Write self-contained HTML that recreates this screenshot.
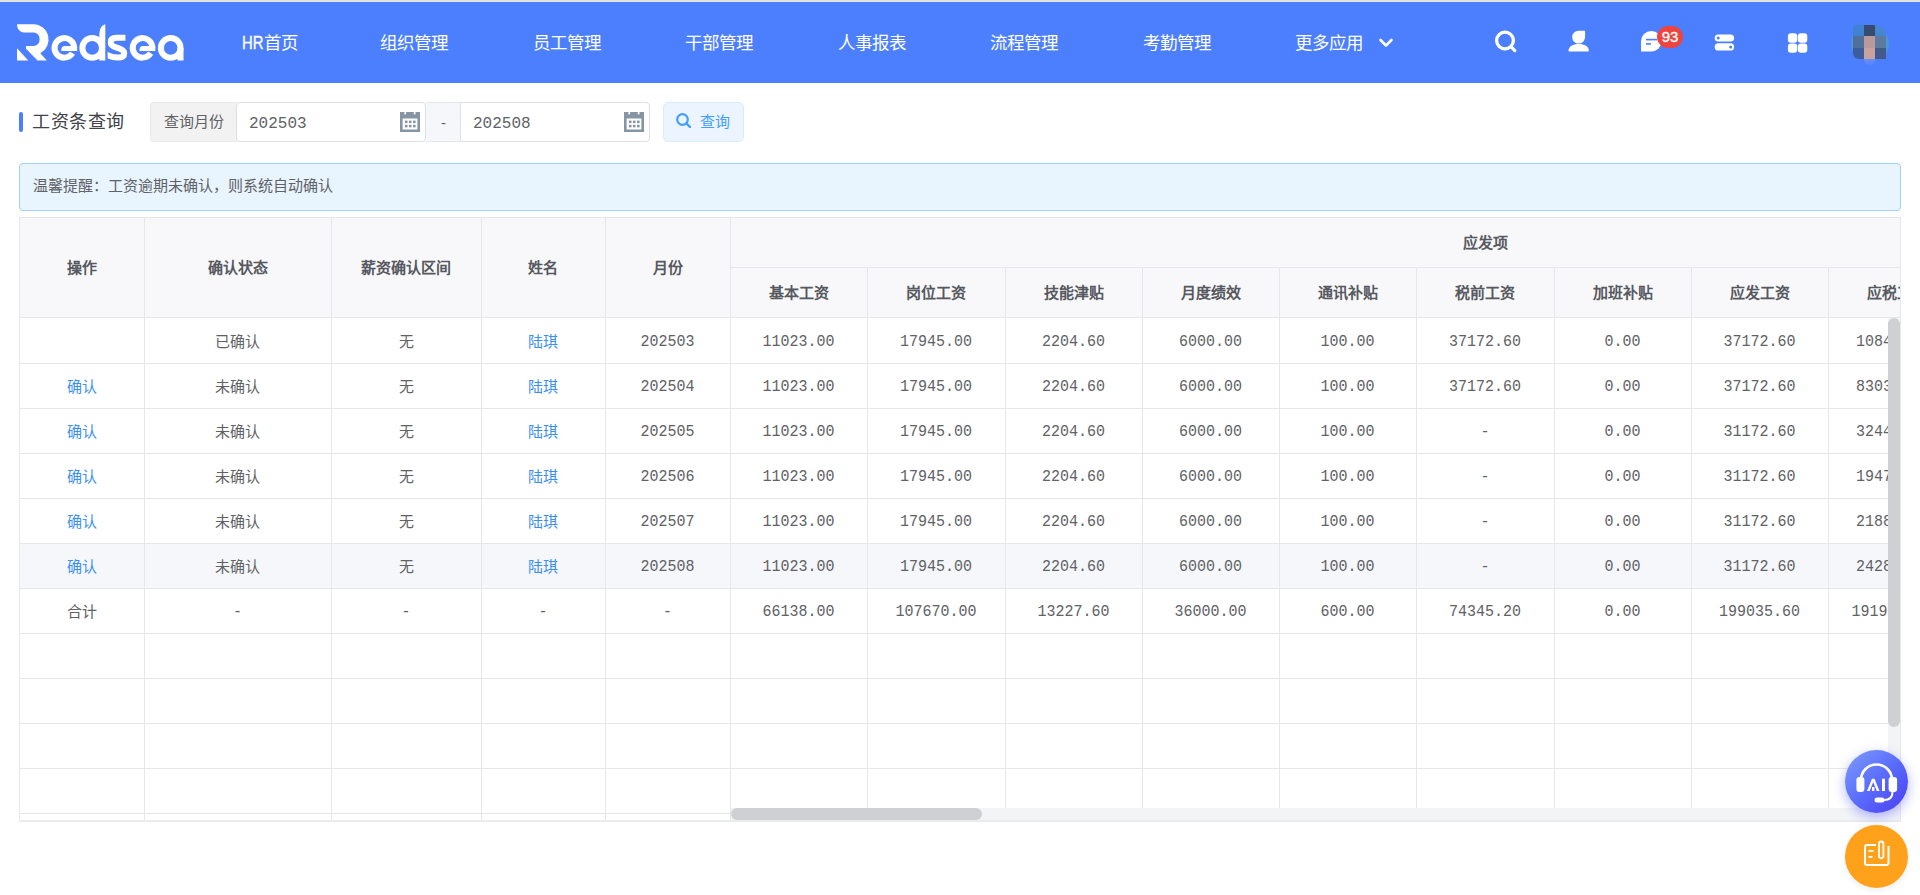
<!DOCTYPE html>
<html lang="zh-CN"><head><meta charset="utf-8"><style>
*{margin:0;padding:0;box-sizing:border-box}
html,body{width:1920px;height:895px;overflow:hidden;background:#fff;font-family:"Liberation Sans",sans-serif;position:relative}
.abs{position:absolute}
.nav{position:absolute;top:29px;height:28px;line-height:28px;font-size:17.5px;font-weight:500;color:#fff;white-space:nowrap}
.hl{position:absolute;height:1px;background:#e6e7ea}
.vl{position:absolute;width:1px;background:#e6e7ea}
.c{position:absolute;text-align:center;white-space:nowrap;font-size:15px;line-height:26px;color:#606266}
.th{font-weight:bold;color:#56595f}
.num{font-family:"Liberation Mono",monospace}
.c.num{transform:scaleY(1.07);transform-origin:50% 11.5px}
.lk{color:#3b8ff7}
</style></head><body>

<div class="abs" style="left:0;top:0;width:1920px;height:2px;background:#e4e4e4"></div>
<div class="abs" style="left:0;top:2px;width:1920px;height:81px;background:#4c7ffe"></div>
<svg class="abs" style="left:0;top:0" width="200" height="83" viewBox="0 0 200 83">
<g fill="#fff">
<path d="M17,24.3 L33.4,24.3 A15.3,15.3 0 0 1 40.3,53.2 L46.9,60.5 L37.6,60.5 L26,48.8 L26,45.9 L34,45.9 A6.8,6.8 0 0 0 34,32.5 L24,32.5 C20,32.5 17,29 17,24.3 Z"/>
<path d="M17,48.2 L17,60.5 L28.3,60.5 Z"/>
<path d="M99.3,60.5 L99.3,36 C99.3,29 101.5,25 105.3,24.3 L105.3,60.5 Z"/>
<rect x="177.5" y="47.9" width="6" height="12.6"/>
<path d="M61.3,50.9 L61.3,49.5 C61.3,47 63,45.9 65,45.9 L77.1,45.9 L77.1,50.9 Z"/>
<path d="M139.5,50.9 L139.5,49.5 C139.5,47 141.2,45.9 143.2,45.9 L155.3,45.9 L155.3,50.9 Z"/>
</g>
<g fill="none" stroke="#fff" stroke-width="6">
<path d="M74.1,47.9 A9.8,9.8 0 1 0 72.5,53.2"/>
<circle cx="92.2" cy="47.9" r="9.8"/>
<path d="M152.3,47.9 A9.8,9.8 0 1 0 150.7,53.2"/>
<circle cx="170.7" cy="47.9" r="9.8"/>
<clipPath id="sc"><path d="M107.6,30 L125.4,30 L125.4,44 L131,44 L131,65 L107.6,65 Z"/></clipPath><path clip-path="url(#sc)" d="M128,37.8 L116.5,37.8 Q110.6,37.8 110.6,42.5 Q110.6,45.6 116,47.4 L119,48.4 Q124.2,50.1 124.2,53.4 Q124.2,57.5 117.5,57.5 Q111,57.5 104,53.5"/>
</g>
</svg>
<div class="nav" style="left:242px"><span style="display:inline-block;transform:scaleX(0.85);transform-origin:0 0;margin-right:-3.5px;-webkit-text-stroke:0.35px #fff">HR</span>首页</div>
<div class="nav" style="left:380px">组织管理</div>
<div class="nav" style="left:533px">员工管理</div>
<div class="nav" style="left:685px">干部管理</div>
<div class="nav" style="left:838px">人事报表</div>
<div class="nav" style="left:990px">流程管理</div>
<div class="nav" style="left:1143px">考勤管理</div>
<div class="nav" style="left:1295px">更多应用</div>
<svg class="abs" style="left:1360px;top:0" width="560" height="83" viewBox="1360 0 560 83">
<polyline points="1380.5,40 1386,45.5 1391.5,40" fill="none" stroke="#fff" stroke-width="2.6" stroke-linecap="round" stroke-linejoin="round"/>
<circle cx="1505" cy="40.5" r="8.4" fill="none" stroke="#fff" stroke-width="3.3"/>
<line x1="1511.5" y1="47.2" x2="1514.8" y2="50.6" stroke="#fff" stroke-width="3.2" stroke-linecap="round"/>
<path fill="#fff" d="M1578.6,30.7 L1585.1,30.7 L1585.1,37.1 A6.45,6.45 0 1 1 1578.6,30.7 Z"/>
<path fill="#fff" d="M1569.5,51.6 Q1568.5,51.6 1568.5,50.6 C1568.5,46.5 1573,43.9 1578.7,43.9 C1584.4,43.9 1588.9,46.5 1588.9,50.6 Q1588.9,51.6 1587.9,51.6 Z"/>
<path fill="#fff" d="M1641,51.6 L1641,41.3 A10.3,10.3 0 1 1 1651.3,51.6 Z"/>
<rect x="1646" y="38.8" width="11" height="1.6" fill="#4c7ffe"/>
<rect x="1646" y="43.1" width="5" height="1.6" fill="#4c7ffe"/>
<rect x="1714.7" y="34.4" width="19.4" height="7.2" rx="3.6" fill="#fff"/>
<rect x="1714.7" y="43.3" width="19.4" height="7.2" rx="3.6" fill="#fff"/>
<circle cx="1718.2" cy="38" r="1.5" fill="#4c7ffe"/>
<circle cx="1730.6" cy="46.9" r="1.5" fill="#4c7ffe"/>
<rect x="1787.9" y="33.2" width="9.4" height="9.6" rx="3" fill="#fff"/>
<rect x="1797.9" y="33.2" width="9.4" height="9.6" rx="3" fill="#fff"/>
<rect x="1787.9" y="43.4" width="9.4" height="9.4" rx="3" fill="#fff"/>
<rect x="1797.9" y="43.4" width="9.4" height="9.4" rx="3" fill="#fff"/>
</svg>
<div class="abs" style="left:1657px;top:26px;width:26px;height:22px;border-radius:11px;background:#ee4440;color:#fff;font-size:15px;line-height:22px;text-align:center;-webkit-text-stroke:0.3px #fff">93</div>
<div class="abs" style="left:1851px;top:25px;width:38px;height:38px;border-radius:50%;background:#4a97dc"></div>
<div class="abs" style="left:1853px;top:25px;width:33px;height:34px;border-radius:4px 12px 0 6px;overflow:hidden">
<div class="abs" style="left:0;top:0;width:11px;height:11px;background:#4181d2"></div>
<div class="abs" style="left:11px;top:0;width:11px;height:11px;background:#364b6e"></div>
<div class="abs" style="left:22px;top:0;width:11px;height:11px;background:#4785d0"></div>
<div class="abs" style="left:0;top:11px;width:11px;height:11.5px;background:#50709b"></div>
<div class="abs" style="left:11px;top:11px;width:11px;height:11.5px;background:#b89a9c"></div>
<div class="abs" style="left:22px;top:11px;width:11px;height:11.5px;background:#5d7a9f"></div>
<div class="abs" style="left:0;top:22.5px;width:11px;height:11.5px;background:#3b5d9b"></div>
<div class="abs" style="left:11px;top:22.5px;width:11px;height:11.5px;background:#c9a19f"></div>
<div class="abs" style="left:22px;top:22.5px;width:11px;height:11.5px;background:#435b8b"></div>
</div>
<div class="abs" style="left:1851px;top:59px;width:38px;height:4px;background:#4c7ffe"></div>
<div class="abs" style="left:1864px;top:59px;width:11px;height:6px;border-radius:0 0 5px 5px;background:linear-gradient(#6a8ef0,rgba(106,142,240,0.3))"></div>

<div class="abs" style="left:19px;top:112px;width:4px;height:20px;border-radius:2px;background:#4c7ffe"></div>
<div class="abs" style="left:32px;top:109px;font-size:18px;letter-spacing:0.5px;line-height:26px;color:#404348">工资条查询</div>
<div class="abs" style="left:150px;top:102px;width:87px;height:40px;background:#f2f2f2;border:1px solid #e8eaee;border-right:none;border-radius:4px 0 0 4px;font-size:15px;line-height:38px;text-align:center;color:#606266">查询月份</div>
<div class="abs" style="left:236px;top:102px;width:190px;height:40px;border:1px solid #dcdfe6;border-radius:4px;background:#fff"></div>
<div class="abs num" style="left:249px;top:104px;height:40px;line-height:40px;font-size:16px;color:#606266">202503</div>
<div class="abs" style="left:426px;top:102px;width:35px;height:40px;background:#f5f7fa;border-top:1px solid #e4e7ed;border-bottom:1px solid #e4e7ed;font-size:15px;line-height:40px;text-align:center;color:#606266">-</div>
<div class="abs" style="left:460px;top:102px;width:190px;height:40px;border:1px solid #dcdfe6;border-radius:0 4px 4px 0;background:#fff"></div>
<div class="abs num" style="left:473px;top:104px;height:40px;line-height:40px;font-size:16px;color:#606266">202508</div>
<svg class="abs" style="left:400px;top:112px" width="20" height="20" viewBox="0 0 20 20">
<rect x="0" y="0" width="20" height="20" fill="#8595a3"/>
<rect x="4.4" y="0" width="1.7" height="2.4" fill="#fff"/><rect x="13.8" y="0" width="1.7" height="2.4" fill="#fff"/>
<rect x="2.6" y="6.5" width="14.8" height="11" fill="#fff"/>
<rect x="4.9" y="8.6" width="2.6" height="2.5" fill="#8595a3"/><rect x="8.9" y="8.6" width="2.6" height="2.5" fill="#8595a3"/><rect x="13" y="8.6" width="2.6" height="2.5" fill="#8595a3"/>
<rect x="4.9" y="12.8" width="2.6" height="2.5" fill="#8595a3"/><rect x="8.9" y="12.8" width="2.6" height="2.5" fill="#8595a3"/><rect x="13" y="12.8" width="2.6" height="2.5" fill="#8595a3"/>
</svg>
<svg class="abs" style="left:624px;top:112px" width="20" height="20" viewBox="0 0 20 20">
<rect x="0" y="0" width="20" height="20" fill="#8595a3"/>
<rect x="4.4" y="0" width="1.7" height="2.4" fill="#fff"/><rect x="13.8" y="0" width="1.7" height="2.4" fill="#fff"/>
<rect x="2.6" y="6.5" width="14.8" height="11" fill="#fff"/>
<rect x="4.9" y="8.6" width="2.6" height="2.5" fill="#8595a3"/><rect x="8.9" y="8.6" width="2.6" height="2.5" fill="#8595a3"/><rect x="13" y="8.6" width="2.6" height="2.5" fill="#8595a3"/>
<rect x="4.9" y="12.8" width="2.6" height="2.5" fill="#8595a3"/><rect x="8.9" y="12.8" width="2.6" height="2.5" fill="#8595a3"/><rect x="13" y="12.8" width="2.6" height="2.5" fill="#8595a3"/>
</svg>
<div class="abs" style="left:663px;top:102px;width:81px;height:40px;border:1px solid #d9ecff;border-radius:5px;background:#ecf5ff"></div>
<svg class="abs" style="left:675px;top:112px" width="18" height="18" viewBox="0 0 18 18"><circle cx="7.5" cy="7.5" r="5.3" fill="none" stroke="#409eff" stroke-width="2.2"/><line x1="11.5" y1="11.5" x2="15" y2="15" stroke="#409eff" stroke-width="2.4" stroke-linecap="round"/></svg>
<div class="abs" style="left:700px;top:102px;line-height:40px;font-size:15px;color:#409eff">查询</div>
<div class="abs" style="left:19px;top:163px;width:1882px;height:48px;border:1px solid #a3d0fd;border-radius:4px;background:#e8f4fe"></div>
<div class="abs" style="left:33px;top:172px;line-height:28px;font-size:15px;color:#606266">温馨提醒：工资逾期未确认，则系统自动确认</div>
<div class="abs" style="left:19px;top:217px;width:1882px;height:100px;background:#f8f8fa"></div>
<div class="abs" style="left:20px;top:544px;width:1868px;height:44px;background:#f5f7fa"></div>
<div class="hl" style="left:19px;top:217px;width:1882px"></div>
<div class="hl" style="left:730px;top:267px;width:1171px"></div>
<div class="hl" style="left:19px;top:317px;width:1882px"></div>
<div class="hl" style="left:19px;top:363px;width:1882px"></div>
<div class="hl" style="left:19px;top:408px;width:1882px"></div>
<div class="hl" style="left:19px;top:453px;width:1882px"></div>
<div class="hl" style="left:19px;top:498px;width:1882px"></div>
<div class="hl" style="left:19px;top:543px;width:1882px"></div>
<div class="hl" style="left:19px;top:588px;width:1882px"></div>
<div class="hl" style="left:19px;top:633px;width:1882px"></div>
<div class="hl" style="left:19px;top:678px;width:1882px"></div>
<div class="hl" style="left:19px;top:723px;width:1882px"></div>
<div class="hl" style="left:19px;top:768px;width:1882px"></div>
<div class="hl" style="left:19px;top:813px;width:711px"></div>
<div class="vl" style="left:19px;top:217px;height:604px"></div>
<div class="vl" style="left:144px;top:217px;height:604px"></div>
<div class="vl" style="left:331px;top:217px;height:604px"></div>
<div class="vl" style="left:481px;top:217px;height:604px"></div>
<div class="vl" style="left:605px;top:217px;height:604px"></div>
<div class="vl" style="left:730px;top:217px;height:604px"></div>
<div class="vl" style="left:867px;top:267px;height:541px"></div>
<div class="vl" style="left:1005px;top:267px;height:541px"></div>
<div class="vl" style="left:1142px;top:267px;height:541px"></div>
<div class="vl" style="left:1279px;top:267px;height:541px"></div>
<div class="vl" style="left:1416px;top:267px;height:541px"></div>
<div class="vl" style="left:1554px;top:267px;height:541px"></div>
<div class="vl" style="left:1691px;top:267px;height:541px"></div>
<div class="vl" style="left:1828px;top:267px;height:541px"></div>
<div class="c th" style="left:19px;width:125px;top:255px">操作</div>
<div class="c th" style="left:144px;width:187px;top:255px">确认状态</div>
<div class="c th" style="left:331px;width:150px;top:255px">薪资确认区间</div>
<div class="c th" style="left:481px;width:124px;top:255px">姓名</div>
<div class="c th" style="left:605px;width:125px;top:255px">月份</div>
<div class="c th" style="left:730px;width:1510px;top:230px">应发项</div>
<div class="c th" style="left:730px;width:137px;top:280px">基本工资</div>
<div class="c th" style="left:867px;width:138px;top:280px">岗位工资</div>
<div class="c th" style="left:1005px;width:137px;top:280px">技能津贴</div>
<div class="c th" style="left:1142px;width:137px;top:280px">月度绩效</div>
<div class="c th" style="left:1279px;width:137px;top:280px">通讯补贴</div>
<div class="c th" style="left:1416px;width:138px;top:280px">税前工资</div>
<div class="c th" style="left:1554px;width:137px;top:280px">加班补贴</div>
<div class="c th" style="left:1691px;width:137px;top:280px">应发工资</div>
<div class="c th" style="left:1828px;width:137px;top:280px">应税工资</div>
<div class="c" style="left:19px;width:125px;top:329px"></div>
<div class="c" style="left:144px;width:187px;top:329px">已确认</div>
<div class="c" style="left:331px;width:150px;top:329px">无</div>
<div class="c lk" style="left:481px;width:124px;top:329px">陆琪</div>
<div class="c num" style="left:605px;width:125px;top:330px">202503</div>
<div class="c num" style="left:730px;width:137px;top:330px">11023.00</div>
<div class="c num" style="left:867px;width:138px;top:330px">17945.00</div>
<div class="c num" style="left:1005px;width:137px;top:330px">2204.60</div>
<div class="c num" style="left:1142px;width:137px;top:330px">6000.00</div>
<div class="c num" style="left:1279px;width:137px;top:330px">100.00</div>
<div class="c num" style="left:1416px;width:138px;top:330px">37172.60</div>
<div class="c num" style="left:1554px;width:137px;top:330px">0.00</div>
<div class="c num" style="left:1691px;width:137px;top:330px">37172.60</div>
<div class="c num" style="left:1828px;width:137px;top:330px">10843.600</div>
<div class="c lk" style="left:19px;width:125px;top:374px">确认</div>
<div class="c" style="left:144px;width:187px;top:374px">未确认</div>
<div class="c" style="left:331px;width:150px;top:374px">无</div>
<div class="c lk" style="left:481px;width:124px;top:374px">陆琪</div>
<div class="c num" style="left:605px;width:125px;top:375px">202504</div>
<div class="c num" style="left:730px;width:137px;top:375px">11023.00</div>
<div class="c num" style="left:867px;width:138px;top:375px">17945.00</div>
<div class="c num" style="left:1005px;width:137px;top:375px">2204.60</div>
<div class="c num" style="left:1142px;width:137px;top:375px">6000.00</div>
<div class="c num" style="left:1279px;width:137px;top:375px">100.00</div>
<div class="c num" style="left:1416px;width:138px;top:375px">37172.60</div>
<div class="c num" style="left:1554px;width:137px;top:375px">0.00</div>
<div class="c num" style="left:1691px;width:137px;top:375px">37172.60</div>
<div class="c num" style="left:1828px;width:137px;top:375px">83036.600</div>
<div class="c lk" style="left:19px;width:125px;top:419px">确认</div>
<div class="c" style="left:144px;width:187px;top:419px">未确认</div>
<div class="c" style="left:331px;width:150px;top:419px">无</div>
<div class="c lk" style="left:481px;width:124px;top:419px">陆琪</div>
<div class="c num" style="left:605px;width:125px;top:420px">202505</div>
<div class="c num" style="left:730px;width:137px;top:420px">11023.00</div>
<div class="c num" style="left:867px;width:138px;top:420px">17945.00</div>
<div class="c num" style="left:1005px;width:137px;top:420px">2204.60</div>
<div class="c num" style="left:1142px;width:137px;top:420px">6000.00</div>
<div class="c num" style="left:1279px;width:137px;top:420px">100.00</div>
<div class="c num" style="left:1416px;width:138px;top:420px">-</div>
<div class="c num" style="left:1554px;width:137px;top:420px">0.00</div>
<div class="c num" style="left:1691px;width:137px;top:420px">31172.60</div>
<div class="c num" style="left:1828px;width:137px;top:420px">32443.600</div>
<div class="c lk" style="left:19px;width:125px;top:464px">确认</div>
<div class="c" style="left:144px;width:187px;top:464px">未确认</div>
<div class="c" style="left:331px;width:150px;top:464px">无</div>
<div class="c lk" style="left:481px;width:124px;top:464px">陆琪</div>
<div class="c num" style="left:605px;width:125px;top:465px">202506</div>
<div class="c num" style="left:730px;width:137px;top:465px">11023.00</div>
<div class="c num" style="left:867px;width:138px;top:465px">17945.00</div>
<div class="c num" style="left:1005px;width:137px;top:465px">2204.60</div>
<div class="c num" style="left:1142px;width:137px;top:465px">6000.00</div>
<div class="c num" style="left:1279px;width:137px;top:465px">100.00</div>
<div class="c num" style="left:1416px;width:138px;top:465px">-</div>
<div class="c num" style="left:1554px;width:137px;top:465px">0.00</div>
<div class="c num" style="left:1691px;width:137px;top:465px">31172.60</div>
<div class="c num" style="left:1828px;width:137px;top:465px">19476.600</div>
<div class="c lk" style="left:19px;width:125px;top:509px">确认</div>
<div class="c" style="left:144px;width:187px;top:509px">未确认</div>
<div class="c" style="left:331px;width:150px;top:509px">无</div>
<div class="c lk" style="left:481px;width:124px;top:509px">陆琪</div>
<div class="c num" style="left:605px;width:125px;top:510px">202507</div>
<div class="c num" style="left:730px;width:137px;top:510px">11023.00</div>
<div class="c num" style="left:867px;width:138px;top:510px">17945.00</div>
<div class="c num" style="left:1005px;width:137px;top:510px">2204.60</div>
<div class="c num" style="left:1142px;width:137px;top:510px">6000.00</div>
<div class="c num" style="left:1279px;width:137px;top:510px">100.00</div>
<div class="c num" style="left:1416px;width:138px;top:510px">-</div>
<div class="c num" style="left:1554px;width:137px;top:510px">0.00</div>
<div class="c num" style="left:1691px;width:137px;top:510px">31172.60</div>
<div class="c num" style="left:1828px;width:137px;top:510px">21886.600</div>
<div class="c lk" style="left:19px;width:125px;top:554px">确认</div>
<div class="c" style="left:144px;width:187px;top:554px">未确认</div>
<div class="c" style="left:331px;width:150px;top:554px">无</div>
<div class="c lk" style="left:481px;width:124px;top:554px">陆琪</div>
<div class="c num" style="left:605px;width:125px;top:555px">202508</div>
<div class="c num" style="left:730px;width:137px;top:555px">11023.00</div>
<div class="c num" style="left:867px;width:138px;top:555px">17945.00</div>
<div class="c num" style="left:1005px;width:137px;top:555px">2204.60</div>
<div class="c num" style="left:1142px;width:137px;top:555px">6000.00</div>
<div class="c num" style="left:1279px;width:137px;top:555px">100.00</div>
<div class="c num" style="left:1416px;width:138px;top:555px">-</div>
<div class="c num" style="left:1554px;width:137px;top:555px">0.00</div>
<div class="c num" style="left:1691px;width:137px;top:555px">31172.60</div>
<div class="c num" style="left:1828px;width:137px;top:555px">24286.600</div>
<div class="c" style="left:19px;width:125px;top:599px">合计</div>
<div class="c num" style="left:144px;width:187px;top:600px">-</div>
<div class="c num" style="left:331px;width:150px;top:600px">-</div>
<div class="c num" style="left:481px;width:124px;top:600px">-</div>
<div class="c num" style="left:605px;width:125px;top:600px">-</div>
<div class="c num" style="left:730px;width:137px;top:600px">66138.00</div>
<div class="c num" style="left:867px;width:138px;top:600px">107670.00</div>
<div class="c num" style="left:1005px;width:137px;top:600px">13227.60</div>
<div class="c num" style="left:1142px;width:137px;top:600px">36000.00</div>
<div class="c num" style="left:1279px;width:137px;top:600px">600.00</div>
<div class="c num" style="left:1416px;width:138px;top:600px">74345.20</div>
<div class="c num" style="left:1554px;width:137px;top:600px">0.00</div>
<div class="c num" style="left:1691px;width:137px;top:600px">199035.60</div>
<div class="c num" style="left:1828px;width:137px;top:600px">191970.000</div>
<div class="abs" style="left:1900px;top:217px;width:20px;height:610px;background:#fff"></div>
<div class="vl" style="left:1900px;top:217px;height:604px"></div>
<div class="abs" style="left:731px;top:808px;width:1157px;height:12px;background:#f3f4f6"></div>
<div class="abs" style="left:731px;top:808px;width:251px;height:12px;border-radius:6px;background:#cfd0d3"></div>
<div class="abs" style="left:1888px;top:318px;width:12px;height:502px;background:#f3f4f6"></div>
<div class="abs" style="left:1888px;top:318px;width:12px;height:409px;border-radius:6px;background:#cfd0d3"></div>
<div class="hl" style="left:19px;top:820px;width:1882px;height:2px;background:#e9ebef"></div>
<div class="abs" style="left:1845px;top:750px;width:63px;height:63px;border-radius:50%;background:linear-gradient(135deg,#7e9eff 0%,#5a6cfb 50%,#4a3df2 100%);box-shadow:0 4px 12px rgba(80,90,255,0.45)"></div>
<svg class="abs" style="left:1845px;top:750px" width="63" height="63" viewBox="1845 750 63 63">
<path d="M1861,780 A15.5,15.5 0 0 1 1892,780" fill="none" stroke="#fff" stroke-width="2.6"/>
<rect x="1856.4" y="777" width="8" height="15" rx="3" fill="#fff"/>
<rect x="1888.6" y="777" width="8.5" height="15" rx="3" fill="#fff"/>
<path d="M1892.5,792 Q1892.5,800 1884,800" fill="none" stroke="#fff" stroke-width="2"/>
<rect x="1874.5" y="797.6" width="10" height="5" rx="2.5" fill="#fff"/>
<path d="M1867,791 L1872,778.7 L1874.5,778.7 L1879.5,791 L1876.8,791 L1873.2,782 L1869.7,791 Z" fill="#fff"/>
<rect x="1872" y="787" width="2.4" height="4" fill="#fff"/>
<rect x="1882" y="778.7" width="3" height="12.3" fill="#fff"/>
</svg>
<div class="abs" style="left:1845px;top:825px;width:63px;height:63px;border-radius:50%;background:#ffa11a;box-shadow:0 2px 6px rgba(0,0,0,0.08)"></div>
<svg class="abs" style="left:1845px;top:825px" width="63" height="63" viewBox="1845 825 63 63">
<path d="M1876,845 L1867,845 Q1865,845 1865,847 L1865,863 Q1865,865 1867,865 L1886.5,865 Q1888.5,865 1888.5,863 L1888.5,846" fill="none" stroke="#fff" stroke-width="2"/>
<path d="M1879,857 L1879,844 Q1879,841.5 1881.2,841.5 Q1883.4,841.5 1883.4,844 L1883.4,857 Q1881.2,859.5 1879,857 Z" fill="none" stroke="#fff" stroke-width="1.8"/>
<rect x="1868.5" y="850" width="5" height="1.8" fill="#fff"/>
<rect x="1868.5" y="856" width="4" height="1.8" fill="#fff"/>
</svg>
</body></html>
